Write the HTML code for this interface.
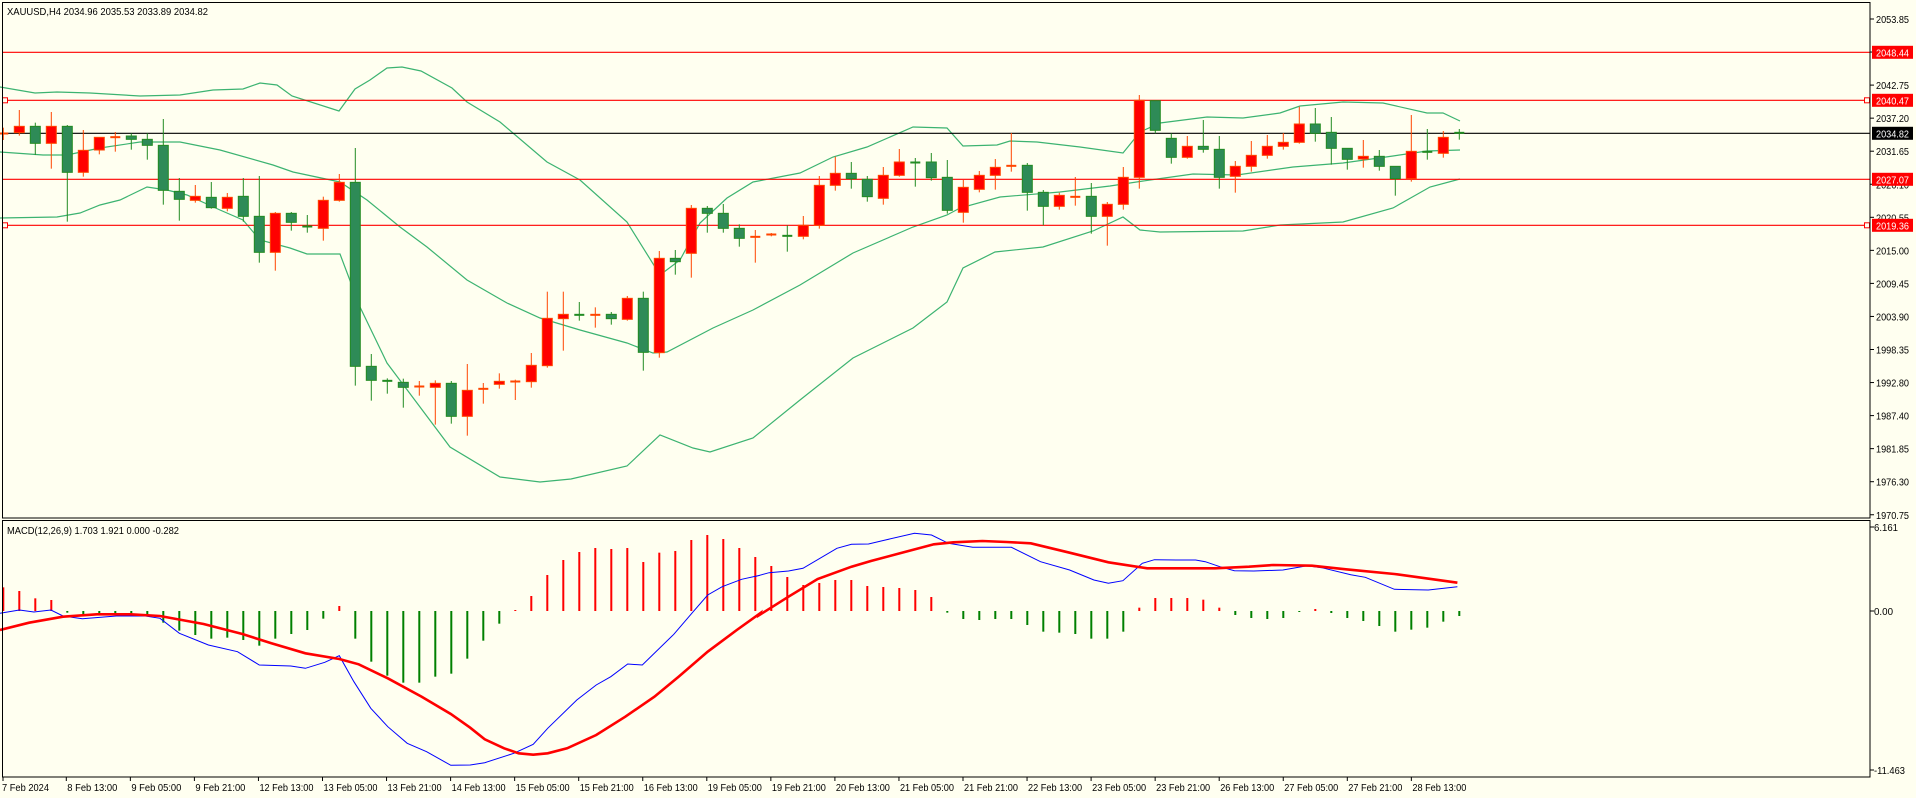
<!DOCTYPE html>
<html><head><meta charset="utf-8">
<style>
html,body{margin:0;padding:0;background:#fffff0;}
svg{display:block;}
text{font-family:"Liberation Sans",sans-serif;font-size:10.5px;fill:#000;}
</style></head>
<body>
<svg id="s" width="1916" height="798" viewBox="0 0 1916 798" xmlns="http://www.w3.org/2000/svg">
<rect x="0" y="0" width="1916" height="798" fill="#fffff0"/>
</svg>
<script>
var S=document.getElementById('s'),out='';
function bx(i){return 3.3+16*i;}
function ly(z){return 80+z/3;}
function T(x,y,w,s,st){return '<text x="'+x+'" y="'+y+'" textLength="'+w+'" lengthAdjust="spacingAndGlyphs"'+(st?' style="'+st+'"':'')+'>'+s+'</text>';}
var C=[
[0,159,161,143,180,'r'],[1,139,158,90,167,'r'],[2,139,190,128,225,'g'],[3,139,190,96,266,'r'],[4,139,277,135,425,'g'],
[5,211,277,150,290,'r'],[6,172,210,172,223,'r'],[7,170,173,156,215,'r'],[8,168,178,160,209,'g'],[9,178,196,160,239,'g'],
[10,196,331,117,374,'g'],[11,334,358,294,422,'g'],[12,349,361,315,368,'r'],[13,352,383,306,386,'g'],[14,352,385,339,394,'r'],
[15,349,409,294,425,'g'],[16,409,517,288,548,'g'],[17,400,517,396,572,'r'],[18,400,427,396,452,'g'],[19,438,445,405,458,'g'],
[20,361,445,350,482,'r'],[21,307,361,282,365,'r'],[22,307,859,204,917,'g'],[23,859,901,822,962,'g'],[24,901,907,895,941,'g'],
[25,907,922,896,983,'g'],[26,918,922,903,947,'r'],[27,910,922,901,1034,'r'],[28,910,1009,903,1031,'g'],[29,931,1009,852,1067,'r'],
[30,925,931,909,971,'r'],[31,904,913,880,926,'r'],[32,903,908,899,960,'r'],[33,856,905,819,923,'r'],[34,715,857,635,863,'r'],
[35,703,716,635,812,'r'],[36,703,710,666,722,'g'],[37,703,707,682,743,'r'],[38,703,716,696,734,'g'],[39,655,718,648,722,'r'],
[40,655,817,635,872,'g'],[41,535,818,513,833,'r'],[42,535,545,510,584,'g'],[43,385,520,375,593,'r'],[44,385,400,378,458,'g'],
[45,400,445,372,458,'g'],[46,445,475,433,500,'g'],[47,469,474,450,548,'r'],[48,462,467,459,469,'r'],[49,466,469,436,515,'g'],
[50,436,469,408,478,'r'],[51,316,436,288,446,'r'],[52,280,316,230,332,'r'],[53,280,296,246,326,'g'],[54,298,350,288,365,'g'],
[55,286,355,261,374,'r'],[56,246,286,207,290,'r'],[57,246,248,234,320,'g'],[58,246,293,219,302,'g'],[59,292,391,240,401,'g'],
[60,322,397,300,428,'r'],[61,286,328,273,337,'r'],[62,262,286,237,329,'r'],[63,256,262,159,275,'r'],[64,256,337,249,392,'g'],
[65,337,379,330,436,'g'],[66,346,379,338,389,'r'],[67,349,353,291,377,'r'],[68,349,409,309,461,'g'],[69,373,409,366,497,'r'],
[70,292,373,261,389,'r'],[71,61,292,45,326,'r'],[72,62,151,62,160,'g'],[73,175,232,160,251,'g'],[74,199,232,168,236,'r'],
[75,199,208,120,218,'g'],[76,208,292,168,326,'g'],[77,259,289,243,338,'r'],[78,226,259,183,275,'r'],[79,199,226,165,236,'r'],
[80,187,199,159,209,'r'],[81,132,187,80,191,'r'],[82,132,160,84,185,'g'],[83,157,205,111,254,'g'],[84,205,238,204,269,'g'],
[85,229,237,180,263,'r'],[86,229,259,210,272,'g'],[87,259,296,258,347,'g'],[88,214,296,105,305,'r'],[89,214,220,147,239,'g'],
[90,172,220,153,233,'r'],[91,157,159,147,179,'g']];
function pts(a,ox,oy,sx,sy){return a.map(function(p){return (ox+p[0]/sx).toFixed(1)+','+(oy+p[1]/sy).toFixed(1);}).join(' ');}
var up=[[0,87],[35,93],[57,92],[90,93],[140,96],[180,95],[213,90],[243,89],[260,83],[277,85],[292,96],[339,111],[355,89],[370,80],[387,68],[402,67],[421,71],[452,88],[467,102],[500,122],[547,162],[580,180],[627,222],[660,275],[680,260],[700,223],[727,198],[753,182],[800,173],[833,157],[867,147],[913,127],[947,128],[963,146],[997,145],[1010,141],[1037,142],[1080,147],[1123,153],[1140,132],[1160,123],[1207,117],[1243,118],[1280,113],[1300,106],[1343,102],[1383,103],[1427,113],[1443,113],[1460,121]];
var mid=[[0,152],[43,155],[67,155],[100,148],[140,142],[180,142],[220,150],[273,165],[293,172],[340,182],[367,200],[400,227],[427,247],[467,280],[500,299],[507,303],[540,318],[580,330],[627,343],[653,353],[667,352],[713,328],[753,310],[800,285],[853,253],[913,227],[947,215],[960,208],[1000,197],[1060,192],[1110,186],[1150,180],[1193,174],[1237,175],[1293,167],[1343,163],[1393,156],[1427,151],[1460,150]];
var lo=[[0,218],[57,217],[80,213],[100,205],[120,200],[147,187],[167,190],[187,195],[220,210],[243,220],[260,240],[290,248],[307,254],[340,254],[360,307],[387,363],[417,403],[450,447],[500,477],[540,482],[571,479],[627,466],[660,435],[693,448],[710,452],[753,438],[800,400],[853,358],[913,328],[947,302],[963,268],[995,252],[1043,247],[1093,231],[1123,217],[1140,230],[1160,232],[1243,231],[1280,225],[1343,222],[1393,208],[1430,187],[1460,179]];
[up,mid,lo].forEach(function(a){out+='<polyline fill="none" stroke="#3cb371" stroke-width="1.2" points="'+pts(a,0,0,1,1)+'"/>';});
[[52.3,'#ff0000'],[100.3,'#ff0000'],[179.3,'#ff0000'],[225.3,'#ff0000'],[133.3,'#000']].forEach(function(l){
 out+='<line x1="2" x2="1870" y1="'+l[0]+'" y2="'+l[0]+'" stroke="'+l[1]+'" stroke-width="1.2"/>';});
[100.3,225.3].forEach(function(y){
 out+='<rect x="2.5" y="'+(y-2.5)+'" width="5" height="5" fill="#fffff0" stroke="#ff0000"/>';
 out+='<rect x="1864.5" y="'+(y-2.5)+'" width="5" height="5" fill="#fffff0" stroke="#ff0000"/>';});
C.forEach(function(c){
 var x=bx(c[0]),g=c[5]=='g',wc=g?'#228b22':'#ff4500',fc=g?'#2e8b57':'#ff0000';
 var t=ly(c[1]),b=ly(c[2]);
 out+='<line x1="'+x+'" x2="'+x+'" y1="'+ly(c[3])+'" y2="'+ly(c[4])+'" stroke="'+wc+'" stroke-width="1"/>';
 if(b-t<2.5){out+='<rect x="'+(x-5)+'" y="'+(t-0.5)+'" width="10" height="2" fill="'+wc+'"/>';}
 else out+='<rect x="'+(x-5)+'" y="'+t+'" width="10" height="'+(b-t)+'" fill="'+fc+'" stroke="'+wc+'" stroke-width="1"/>';
});
var H=[262,273,295,300,338,345,345,342,340,345,368,392,405,416,413,420,437,416,402,390,356,318,416,485,527,548,548,530,521,476,422,371,330,288,225,180,156,144,147,144,186,158,153,120,105,117,144,171,198,231,255,249,240,240,258,261,264,270,291,338,357,360,357,357,375,395,398,402,416,416,395,323,294,294,294,299,323,345,354,357,354,336,327,339,354,363,378,395,389,383,365,348];
H.forEach(function(h,i){var x=bx(i),y=500+h/3,z=611;var u=h<333;
 out+='<rect x="'+(x-1)+'" y="'+Math.min(y,z)+'" width="2" height="'+Math.max(1,Math.abs(y-z))+'" fill="'+(u?'#ff0000':'#008000')+'"/>';});
var b8=[[0,340],[40,330],[70,336],[105,330],[130,348],[170,356],[240,348],[300,348],[330,355],[370,400],[430,435],[490,455],[535,495],[600,498],[630,505],[670,487],[700,467],[730,545],[765,625],[800,680],[840,730],[880,755],[930,796],[970,795],[1000,788],[1060,760],[1100,733],[1130,685],[1190,600],[1230,555],[1260,530],[1295,492],[1325,495],[1390,403],[1430,335],[1460,285],[1490,260],[1530,238],[1568,226]];
var b9=[[30,230],[60,218],[100,213],[130,205],[200,145],[230,133],[265,132],[300,120],[360,100],[395,105],[430,130],[480,142],[560,142],[620,185],[680,210],[730,240],[760,250],[790,242],[830,190],[855,179],[900,180],[940,180],[960,185],[990,200],[1020,212],[1060,213],[1120,210],[1170,197],[1200,203],[1260,224],[1290,232],[1350,268],[1420,270],[1480,260]];
var r8=[[0,390],[60,368],[130,350],[200,343],[270,343],[330,348],[420,372],[500,402],[560,430],[630,460],[700,477],[740,493],[800,535],[870,590],[930,642],[970,683],[1000,718],[1040,745],[1070,760],[1100,764],[1130,760],[1170,745],[1230,705],[1290,650],[1350,590],[1400,530],[1460,455],[1520,390],[1568,340]];
var r9=[[40,345],[100,290],[160,237],[230,200],[270,183],[330,160],[400,133],[440,127],[500,123],[550,126],[600,130],[680,158],[760,187],[840,205],[980,205],[1050,200],[1100,195],[1180,197],[1250,208],[1350,222],[1430,238],[1480,248]];
out+='<polyline fill="none" stroke="#0000ff" stroke-width="1" points="'+pts(b8,0,500,2.063,3)+' '+pts(b9,740,500,2.063,3)+'"/>';
out+='<polyline fill="none" stroke="#ff0000" stroke-width="2.6" points="'+pts(r8,0,500,2.063,3)+' '+pts(r9,740,500,2.063,3)+'"/>';
out+='<rect x="2.5" y="2.5" width="1867.5" height="515.5" fill="none" stroke="#000" stroke-width="1"/>';
out+='<rect x="2.5" y="520.5" width="1867.5" height="256.5" fill="none" stroke="#000" stroke-width="1"/>';
var P=['2053.85','2048.30','2042.75','2037.20','2031.65','2026.10','2020.55','2015.00','2009.45','2003.90','1998.35','1992.80','1987.40','1981.85','1976.30','1970.75'];
P.forEach(function(p,k){var y=19+33.05*k;out+='<line x1="1870" x2="1874" y1="'+y+'" y2="'+y+'" stroke="#000"/>'+T(1876,y+4,33,p);});
[[52.3,'2048.44','#ff0000'],[100.3,'2040.47','#ff0000'],[179.3,'2027.07','#ff0000'],[225.3,'2019.36','#ff0000'],[133.3,'2034.82','#000']].forEach(function(l){
 out+='<rect x="1872" y="'+(l[0]-6.5)+'" width="41" height="13" fill="'+l[2]+'"/>'+T(1876,l[0]+4,33,l[1],'fill:#fff');});
[[527,'6.161',24],[611,'0.00',19],[770,'-11.463',31]].forEach(function(l){out+='<line x1="1870" x2="1874" y1="'+l[0]+'" y2="'+l[0]+'" stroke="#000"/>'+T(1874,l[0]+4,l[2],l[1]);});
var D=['8 Feb 13:00','9 Feb 05:00','9 Feb 21:00','12 Feb 13:00','13 Feb 05:00','13 Feb 21:00','14 Feb 13:00','15 Feb 05:00','15 Feb 21:00','16 Feb 13:00','19 Feb 05:00','19 Feb 21:00','20 Feb 13:00','21 Feb 05:00','21 Feb 21:00','22 Feb 13:00','23 Feb 05:00','23 Feb 21:00','26 Feb 13:00','27 Feb 05:00','27 Feb 21:00','28 Feb 13:00'];
out+='<line x1="3" x2="3" y1="777" y2="781" stroke="#000"/>'+T(2,791,47,'7 Feb 2024');
D.forEach(function(d,k){var x=66.3+64.05*k;out+='<line x1="'+x+'" x2="'+x+'" y1="777" y2="781" stroke="#000"/>'+T(x+1,791,d.length>11?54:50,d);});
out+=T(7,15,201,'XAUUSD,H4  2034.96 2035.53 2033.89 2034.82');
out+=T(7,534,172,'MACD(12,26,9) 1.703 1.921 0.000 -0.282');
S.insertAdjacentHTML('beforeend',out);
</script>
</body></html>
